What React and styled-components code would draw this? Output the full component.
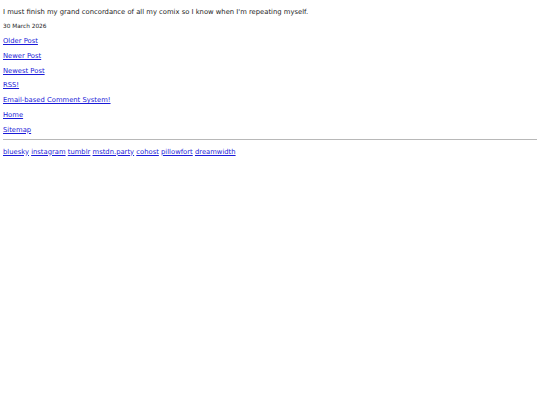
import React from "react";
import styled, { createGlobalStyle } from "styled-components";

const GlobalStyle = createGlobalStyle`
  html, body {
    margin: 0;
    padding: 0;
    background: #fff;
  }
  body {
    padding: 5px 3px 4px;
    font-family: "DejaVu Sans", Verdana, sans-serif;
    color: #1c1c1c;
  }
`;

const Page = styled.div`
  display: flex;
  flex-direction: column;
`;

const Title = styled.p`
  margin: 2px 0 4px;
  font-size: 6.8px;
  line-height: 10px;
`;

const DateLine = styled.p`
  margin: 0 0 3px;
  font-size: 5.8px;
  line-height: 10px;
`;

const NavItem = styled.p`
  margin: 0;
  font-size: 6.8px;
  line-height: 14.8px;
`;

const Link = styled.a`
  color: #1a1ad8;
  text-decoration: underline;
`;

const Rule = styled.hr`
  margin: 1px 0 7px;
  border: 0;
  border-top: 1px solid #b8b8b8;
  height: 0;
`;

const Footer = styled.p`
  margin: 0;
  font-size: 6.8px;
  line-height: 10px;
`;

const navLinks = [
  "Older Post",
  "Newer Post",
  "Newest Post",
  "RSS!",
  "Email-based Comment System!",
  "Home",
  "Sitemap",
];

const socials = [
  "bluesky",
  "instagram",
  "tumblr",
  "mstdn.party",
  "cohost",
  "pillowfort",
  "dreamwidth",
];

export default function App() {
  return (
    <Page>
      <GlobalStyle />
      <Title>
        I must finish my grand concordance of all my comix so I know when I'm
        repeating myself.
      </Title>
      <DateLine>30 March 2026</DateLine>
      {navLinks.map((label) => (
        <NavItem key={label}>
          <Link href="#">{label}</Link>
        </NavItem>
      ))}
      <Rule />
      <Footer>
        {socials.map((s, i) => (
          <React.Fragment key={s}>
            {i > 0 && " "}
            <Link href="#">{s}</Link>
          </React.Fragment>
        ))}
      </Footer>
    </Page>
  );
}
